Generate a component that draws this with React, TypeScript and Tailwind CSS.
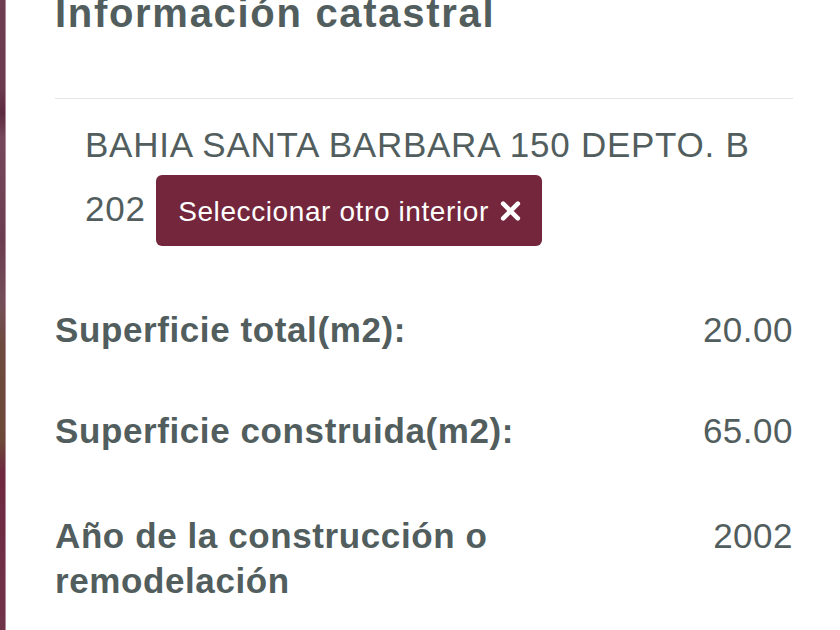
const rows = [
  { label: 'Superficie total(m2):', value: '20.00', mt: 'mt-[61px]' },
  { label: 'Superficie construida(m2):', value: '65.00', mt: 'mt-[56px]' },
  { label: 'Año de la construcción o remodelación', value: '2002', mt: 'mt-[60px]' },
];

export default function App() {
  return (
    <div className="flex h-[630px] w-[840px] overflow-hidden bg-white font-['Liberation_Sans',Arial,sans-serif] text-[#525e5e]">
      {/* blurred map edge on the left */}
      <div className="h-full w-[5px] shrink-0 bg-[linear-gradient(180deg,#6d3d52_0%,#6a3a4f_14%,#5c2a40_18%,#74485a_22%,#6b3d50_38%,#744f5a_48%,#6d4a3d_55%,#6b4837_70%,#6e2840_75%,#70344a_100%)]" />
      <div className="w-px shrink-0 bg-[#b58a9a]" />

      <div className="flex-1 pl-[49px] pr-[47px]">
        <h2 className="-mt-[11px] text-[40px] font-bold leading-[48px] tracking-[1.7px]">Información catastral</h2>

        <div className="mt-[61px] h-px bg-[#e3e6e8]" />

        <p className="mt-[16px] pl-[30px] text-[35px] leading-[60px] tracking-[0.75px]">
          BAHIA SANTA BARBARA 150 DEPTO. B 202{' '}
          <button className="inline-block rounded-[6px] bg-[#73263c] pb-[13px] pl-[22px] pr-[20px] pt-[16px] align-baseline text-[28px] leading-[42px] tracking-[0.6px] text-white">
            Seleccionar otro interior
            <svg viewBox="0 0 24 24" className="ml-[10px] inline-block h-[22px] w-[23px] align-[-1px]">
              <path d="M4 4L20 20M20 4L4 20" stroke="white" strokeWidth="5" strokeLinecap="round" fill="none" />
            </svg>
          </button>
        </p>

        {rows.map((row) => (
          <div key={row.label} className={`flex items-start justify-between ${row.mt} text-[35px] leading-[45px]`}>
            <span className="w-[492px] font-bold tracking-[0.6px]">{row.label}</span>
            <span className="tracking-[0.5px]">{row.value}</span>
          </div>
        ))}
      </div>
    </div>
  );
}
